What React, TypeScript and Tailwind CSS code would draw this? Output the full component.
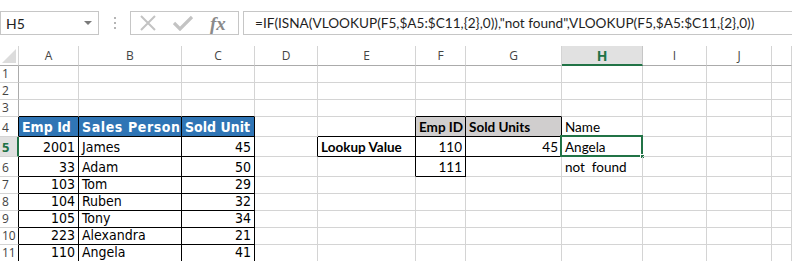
import React from 'react';

const cols = ['A', 'B', 'C', 'D', 'E', 'F', 'G', 'H', 'I', 'J', ''];
const rowHeights = [17, 17, 17, 20, 20, 20, 17, 17, 17, 17, 17];

type Cell = { v: string; align?: 'l' | 'r'; kind?: 'tbl' | 'tblHead' | 'cal' | 'calBold' | 'calHead'; extra?: string };

// sheet content, keyed by "row:col" (col index 0 = A)
const cells: Record<string, Cell> = {
  '4:0': { v: 'Emp Id', kind: 'tblHead' },
  '4:1': { v: 'Sales Person', kind: 'tblHead', extra: 'tracking-[0.6px]' },
  '4:2': { v: 'Sold Unit', kind: 'tblHead' },
  '4:5': { v: 'Emp ID', kind: 'calHead' },
  '4:6': { v: 'Sold Units', kind: 'calHead' },
  '4:7': { v: 'Name', kind: 'cal' },
  '5:4': { v: 'Lookup Value', kind: 'calBold' },
  '5:5': { v: '110', kind: 'cal', align: 'r' },
  '5:6': { v: '45', kind: 'cal', align: 'r' },
  '5:7': { v: 'Angela', kind: 'cal' },
  '6:5': { v: '111', kind: 'cal', align: 'r' },
  '6:7': { v: 'not  found', kind: 'cal' },
};

const people: [string, string, string][] = [
  ['2001', 'James', '45'],
  ['33', 'Adam', '50'],
  ['103', 'Tom', '29'],
  ['104', 'Ruben', '32'],
  ['105', 'Tony', '34'],
  ['223', 'Alexandra', '21'],
  ['110', 'Angela', '41'],
];
people.forEach((p, i) => {
  cells[`${i + 5}:0`] = { v: p[0], kind: 'tbl', align: 'r' };
  cells[`${i + 5}:1`] = { v: p[1], kind: 'tbl' };
  cells[`${i + 5}:2`] = { v: p[2], kind: 'tbl', align: 'r' };
});

const boxed = (r: number, c: number) =>
  (r >= 4 && r <= 11 && c >= 0 && c <= 2) ||
  (r === 5 && c === 4) ||
  (r >= 4 && r <= 6 && c === 5) ||
  (r >= 4 && r <= 5 && c === 6);

const kindClass: Record<string, string> = {
  tbl: "font-['DejaVu_Sans_Condensed',sans-serif] text-[14px] text-black",
  tblHead: "font-['DejaVu_Sans_Condensed',sans-serif] text-[14px] font-bold text-white bg-[#2f75b5]",
  cal: "font-['Lato',sans-serif] text-[13.5px] text-black",
  calBold: "font-['Lato',sans-serif] text-[13.5px] font-bold text-black",
  calHead: "font-['Lato',sans-serif] text-[13.5px] font-bold text-black bg-[#d0cece]",
};

const FormulaBar: React.FC = () => (
  <div className="flex h-[46px] items-start bg-white pt-[11px]">
    <div className="flex h-[24px] w-[99px] items-center justify-between border border-[#c6c6c6] pl-[5px] pr-[6px] font-['Lato',sans-serif] text-[14px] text-[#222]">
      <span>H5</span>
      <svg width="8" height="5" viewBox="0 0 8 5">
        <path d="M0 0h8L4 4z" fill="#7a7a7a" />
      </svg>
    </div>
    <div className="flex w-[31px] flex-col items-center gap-[3px] pt-[6px]">
      <span className="h-[2px] w-[2px] bg-[#b5b5b5]" />
      <span className="h-[2px] w-[2px] bg-[#b5b5b5]" />
      <span className="h-[2px] w-[2px] bg-[#b5b5b5]" />
    </div>
    <div className="flex h-[24px] w-[109px] items-center border border-[#c6c6c6] pl-[8px]">
      <svg width="18" height="16" viewBox="0 0 18 16">
        <path d="M2 1l14 14M16 1L2 15" stroke="#c3c3c3" strokeWidth="2" fill="none" />
      </svg>
      <svg width="20" height="16" viewBox="0 0 20 16" className="ml-[16px]">
        <path d="M1 8l6 6L19 2" stroke="#c3c3c3" strokeWidth="3.2" fill="none" />
      </svg>
      <span className="ml-[17px] font-['Liberation_Serif',serif] text-[19px] font-bold italic leading-none text-[#8a8a8a]">fx</span>
    </div>
    <div className="ml-[4px] flex h-[24px] flex-1 items-center border border-r-0 border-[#c6c6c6] pl-[11px] font-['Lato',sans-serif] text-[13.6px] whitespace-nowrap text-[#1f1f1f]">
      =IF(ISNA(VLOOKUP(F5,$A5:$C11,{'{'}2{'}'},0)),"not found",VLOOKUP(F5,$A5:$C11,{'{'}2{'}'},0))
    </div>
  </div>
);

const App: React.FC = () => {
  return (
    <div className="h-[261px] w-[792px] overflow-hidden bg-white">
      <FormulaBar />
      <div className="grid grid-cols-[19px_60px_103px_73px_63px_98px_50px_96px_81px_64px_65px_1fr] grid-rows-[20px_17px_17px_17px_20px_20px_20px_17px_17px_17px_17px_17px]">
        {/* corner */}
        <div className="relative border-r border-b border-[#ababab] border-r-[#d4d4d4] bg-white">
          <svg width="14" height="14" viewBox="0 0 14 14" className="absolute right-[2px] bottom-[2px]">
            <path d="M14 0V14H0z" fill="#dcdcdc" />
          </svg>
        </div>
        {cols.map((c, i) => (
          <div
            key={c + i}
            className={`flex items-center justify-center border-r font-['Open_Sans',sans-serif] text-[12px] ${
              c === 'H'
                ? 'border-b-2 border-b-[#217346] border-r-[#c6c6c6] bg-[#e1e1e1] font-bold text-[14px] text-[#217346]'
                : 'border-b border-b-[#ababab] border-r-[#d4d4d4] bg-white text-[#444]'
            }`}
          >
            {c}
          </div>
        ))}
        {rowHeights.map((_, ri) => {
          const r = ri + 1;
          const sel = r === 5;
          return (
            <React.Fragment key={r}>
              <div
                className={`flex items-end pb-[1px] pl-[2px] font-['Open_Sans',sans-serif] text-[12px] leading-[15px] border-b border-b-[#d4d4d4] ${
                  sel
                    ? 'border-r-2 border-r-[#217346] bg-[#e1e1e1] font-bold text-[13px] text-[#217346]'
                    : `border-r ${boxed(r, 0) ? 'border-r-black' : 'border-r-[#ababab]'} text-[#444]`
                }`}
              >
                {r}
              </div>
              {cols.map((_, ci) => {
                const cell = cells[`${r}:${ci}`];
                const right = boxed(r, ci) || boxed(r, ci + 1) ? 'border-r-black' : 'border-r-[#d4d4d4]';
                const bottom = boxed(r, ci) || boxed(r + 1, ci) ? 'border-b-black' : 'border-b-[#d4d4d4]';
                return (
                  <div
                    key={ci}
                    className={`relative flex items-end overflow-visible whitespace-pre border-r border-b px-[3px] leading-[17px] ${right} ${bottom} ${
                      cell?.align === 'r' ? 'justify-end' : 'justify-start'
                    } ${cell ? kindClass[cell.kind || 'tbl'] : ''} ${cell?.extra ?? ''}`}
                  >
                    {cell?.v}
                    {r === 5 && ci === 7 && (
                      <div className="absolute top-[-2px] left-[-2px] h-[22px] w-[83px] border-2 border-[#217346]">
                        <span className="absolute right-[-4px] bottom-[-4px] h-[5px] w-[5px] border border-white bg-[#217346]" />
                      </div>
                    )}
                  </div>
                );
              })}
            </React.Fragment>
          );
        })}
      </div>
    </div>
  );
};

export default App;
